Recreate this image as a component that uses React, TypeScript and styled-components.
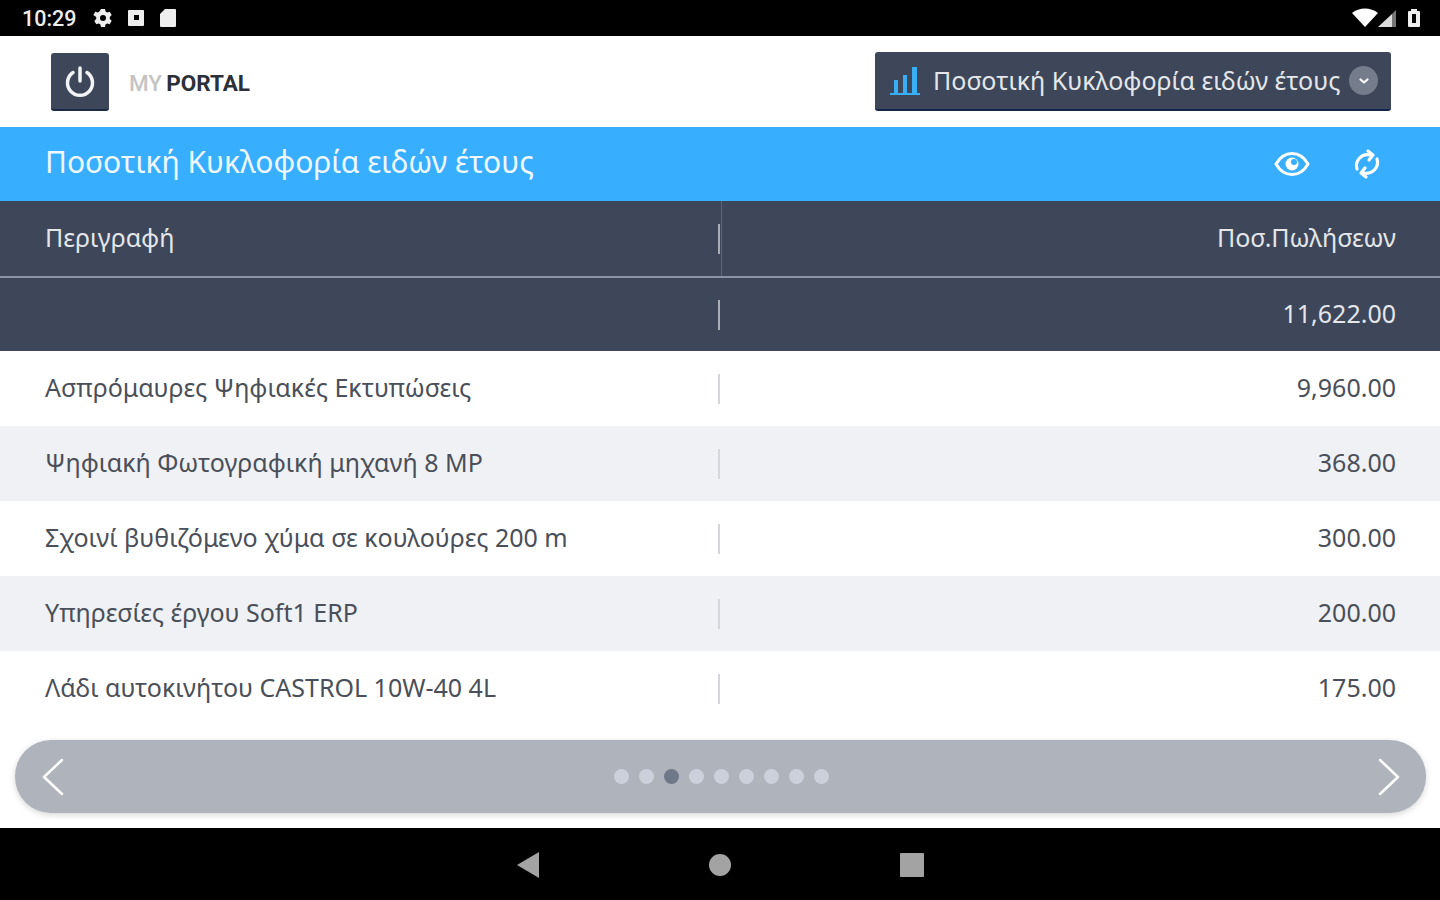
import { createGlobalStyle, styled } from "styled-components";

const rows = [
  { name: "Ασπρόμαυρες Ψηφιακές Εκτυπώσεις", qty: "9,960.00" },
  { name: "Ψηφιακή Φωτογραφική μηχανή 8 MP", qty: "368.00" },
  { name: "Σχοινί βυθιζόμενο χύμα σε κουλούρες 200 m", qty: "300.00" },
  { name: "Υπηρεσίες έργου Soft1 ERP", qty: "200.00" },
  { name: "Λάδι αυτοκινήτου CASTROL 10W-40 4L", qty: "175.00" },
];

const dots = [0, 1, 2, 3, 4, 5, 6, 7, 8];

export default function App() {
  return (
    <>
      <GlobalStyle />
      <Screen>
        <StatusBar>
          <StatusGroup>
            <Clock>10:29</Clock>
            <svg width="20" height="20" viewBox="0 0 20 20">
              <path
                fill="#eee"
                fillRule="evenodd"
                d="M8 1h4l.6 2.6 1.6.9 2.5-.8 2 3.4-1.9 1.800v2.100l1.900 1.800-2 3.400-2.500-.8-1.600.9L12 19H8l-.6-2.600-1.600-.9-2.500.8-2-3.400 1.900-1.800V8.900L.3 7.100l2-3.400 2.500.8 1.600-.9zM10 7a3 3 0 100 6 3 3 0 000-6z"
              />
            </svg>
            <svg width="18" height="18" viewBox="0 0 18 18">
              <path fill="#eee" fillRule="evenodd" d="M2 1h14a1 1 0 011 1v14a1 1 0 01-1 1H2a1 1 0 01-1-1V2a1 1 0 011-1zm5 5v5h5V6z" />
            </svg>
            <svg width="18" height="20" viewBox="0 0 18 20">
              <path fill="#eee" d="M6 1h10a1 1 0 011 1v16a1 1 0 01-1 1H2a1 1 0 01-1-1V6z" />
            </svg>
          </StatusGroup>
          <StatusGroup $gap={11}>
            <svg width="44" height="22" viewBox="0 0 44 22">
              <path fill="#fff" d="M0 6c7-6 19-6 26 0L13 20z" />
              <path fill="#777" d="M44 3v17h-4V7z" />
              <path fill="#ddd" d="M40 7v13H26z" />
            </svg>
            <svg width="14" height="20" viewBox="0 0 14 20">
              <path fill="#eee" fillRule="evenodd" d="M4 1h6v2h2a1 1 0 011 1v14a1 1 0 01-1 1H2a1 1 0 01-1-1V4a1 1 0 011-1h2zm1 5v9h4V6z" />
            </svg>
          </StatusGroup>
        </StatusBar>

        <Header>
          <Brand>
            <PowerButton>
              <svg width="34" height="34" viewBox="0 0 34 34" fill="none" stroke="#f2f4f7" strokeWidth="3.500" strokeLinecap="round">
                <path d="M17 4v13" />
                <path d="M10 8.500a12.500 12.500 0 1014 0" />
              </svg>
            </PowerButton>
            <Logo>
              <LogoMy>MY</LogoMy>
              <LogoPortal>PORTAL</LogoPortal>
            </Logo>
          </Brand>
          <ReportSelect>
            <svg width="30" height="32" viewBox="0 0 30 32" fill="#3aaef5">
              <rect x="4" y="15" width="4" height="13" />
              <rect x="13" y="10" width="4" height="18" />
              <rect x="22" y="2" width="5" height="26" />
              <rect x="0" y="28" width="30" height="2" />
            </svg>
            <ReportLabel>Ποσοτική Κυκλοφορία ειδών έτους</ReportLabel>
            <Chevron>
              <svg width="14" height="14" viewBox="0 0 14 14" fill="none" stroke="#fff" strokeWidth="2.200" strokeLinecap="round" strokeLinejoin="round">
                <path d="M3.500 5.500L7 8.500l3.500-3" />
              </svg>
            </Chevron>
          </ReportSelect>
        </Header>

        <TitleBar>
          <Title>Ποσοτική Κυκλοφορία ειδών έτους</Title>
          <TitleActions>
            <svg width="36" height="28" viewBox="0 0 36 28" fill="none" stroke="#fff" strokeWidth="3">
              <path d="M2 14C6 7 11 3.500 18 3.500S30 7 34 14c-4 7-9 10.500-16 10.500S6 21 2 14z" />
              <circle cx="18" cy="14" r="6.500" fill="#fff" stroke="none" />
              <circle cx="20" cy="12" r="3" fill="#38aeff" stroke="none" />
            </svg>
            <svg width="28" height="32" viewBox="0 0 28 32" fill="none" stroke="#fff" strokeWidth="3.200" strokeLinecap="round" strokeLinejoin="round">
              <path d="M4 21a11 11 0 0113-14" />
              <path d="M15 3l5 4-4 5" />
              <path d="M24 11a11 11 0 01-13 14" />
              <path d="M13 29l-5-4 4-5" />
            </svg>
          </TitleActions>
        </TitleBar>

        <HeadRow>
          <NameCell>Περιγραφή</NameCell>
          <Divider $light />
          <QtyCell>Ποσ.Πωλήσεων</QtyCell>
        </HeadRow>
        <TotalRow>
          <NameCell />
          <Divider $light />
          <QtyCell>11,622.00</QtyCell>
        </TotalRow>

        {rows.map((row, i) => (
          <DataRow key={row.name} $striped={i % 2 === 1}>
            <NameCell>{row.name}</NameCell>
            <Divider />
            <QtyCell>{row.qty}</QtyCell>
          </DataRow>
        ))}

        <PagerArea>
          <Pager>
            <svg width="26" height="38" viewBox="0 0 26 38" fill="none" stroke="#fff" strokeWidth="2.500" strokeLinecap="round" strokeLinejoin="round">
              <path d="M22 2L4 19l18 17" />
            </svg>
            <Dots>
              {dots.map((d) => (
                <Dot key={d} $active={d === 2} />
              ))}
            </Dots>
            <svg width="26" height="38" viewBox="0 0 26 38" fill="none" stroke="#fff" strokeWidth="2.500" strokeLinecap="round" strokeLinejoin="round">
              <path d="M4 2l18 17L4 36" />
            </svg>
          </Pager>
        </PagerArea>

        <NavBar>
          <svg width="24" height="26" viewBox="0 0 24 26">
            <path fill="#a3a3a3" d="M1 13L23 0v26z" />
          </svg>
          <svg width="24" height="24" viewBox="0 0 24 24">
            <circle cx="12" cy="12" r="11" fill="#a3a3a3" />
          </svg>
          <svg width="24" height="24" viewBox="0 0 24 24">
            <rect width="24" height="24" rx="1" fill="#a3a3a3" />
          </svg>
        </NavBar>
      </Screen>
    </>
  );
}

const GlobalStyle = createGlobalStyle`
  html, body {
    margin: 0;
    padding: 0;
    background: #fff;
  }

  body {
    font-family: "Noto Sans", "Open Sans", sans-serif;
  }
`;

const Screen = styled.div`
  width: 1440px;
  height: 900px;
  display: flex;
  flex-direction: column;
  overflow: hidden;
`;

const StatusBar = styled.div`
  height: 36px;
  flex: none;
  box-sizing: border-box;
  background: #000;
  display: flex;
  align-items: center;
  justify-content: space-between;
  padding: 0 19px 0 22px;
`;

const StatusGroup = styled.div<{ $gap?: number }>`
  display: flex;
  align-items: center;
  gap: ${(p) => p.$gap ?? 14}px;
`;

const Clock = styled.span`
  font-family: Roboto, sans-serif;
  font-size: 21.500px;
  font-weight: 500;
  color: #eee;
  margin-right: 2px;
`;

const Header = styled.div`
  height: 91px;
  flex: none;
  box-sizing: border-box;
  background: #fff;
  display: flex;
  align-items: center;
  justify-content: space-between;
  padding: 0 49px 0 51px;
`;

const Brand = styled.div`
  display: flex;
  align-items: center;
  gap: 20px;
`;

const PowerButton = styled.div`
  width: 58px;
  height: 58px;
  background: #3d4759;
  border-bottom: 2px solid #1c2a45;
  border-radius: 3px;
  box-sizing: border-box;
  display: flex;
  align-items: center;
  justify-content: center;
`;

const Logo = styled.div`
  font-family: Roboto, sans-serif;
  font-size: 22.500px;
  font-weight: 700;
  display: flex;
  gap: 4px;
  padding-top: 2px;
`;

const LogoMy = styled.span`
  color: #c4c4c4;
  font-weight: 500;
`;

const LogoPortal = styled.span`
  color: #2b3038;
`;

const ReportSelect = styled.div`
  width: 516px;
  height: 59px;
  box-sizing: border-box;
  background: #3d4759;
  border-bottom: 2px solid #16264a;
  border-radius: 3px;
  display: flex;
  align-items: center;
  padding: 0 13px 0 15px;
`;

const ReportLabel = styled.span`
  font-size: 25px;
  color: #e4e6ea;
  margin-left: 13px;
  padding-bottom: 2px;
  flex: 1;
  white-space: nowrap;
`;

const Chevron = styled.span`
  width: 29px;
  height: 29px;
  border-radius: 50%;
  background: #757c8c;
  display: flex;
  align-items: center;
  justify-content: center;
`;

const TitleBar = styled.div`
  height: 74px;
  flex: none;
  box-sizing: border-box;
  background: #38aeff;
  display: flex;
  align-items: center;
  justify-content: space-between;
  padding: 0 59px 1px 45px;
`;

const Title = styled.span`
  font-size: 30px;
  color: #eef8ff;
  padding-bottom: 4px;
`;

const TitleActions = styled.div`
  display: flex;
  align-items: center;
  gap: 43px;
`;

const TableRow = styled.div`
  height: 75px;
  flex: none;
  box-sizing: border-box;
  display: flex;
  align-items: center;
  padding: 0 44px 0 45px;
`;

const HeadRow = styled(TableRow)`
  position: relative;
  height: 77px;
  background: #3d4759;
  color: #e4e6ea;
  border-bottom: 2px solid #8d94a1;

  /* thin resize line of the header cell */
  &::after {
    content: "";
    position: absolute;
    top: 0;
    bottom: 0;
    left: 721px;
    width: 1px;
    background: #5d6575;
  }
`;

const TotalRow = styled(TableRow)`
  height: 73px;
  background: #3d4759;
  color: #e4e6ea;
`;

const DataRow = styled(TableRow)<{ $striped: boolean }>`
  background: ${(p) => (p.$striped ? "#eff1f5" : "#fff")};
  color: #4a4f59;
`;

const NameCell = styled.div`
  width: 673px;
  flex: none;
  font-size: 25px;
  white-space: nowrap;
  padding-bottom: 3px;
`;

const Divider = styled.div<{ $light?: boolean }>`
  width: 2px;
  height: 30px;
  flex: none;
  background: ${(p) => (p.$light ? "#a9aeb8" : "#d5d7dc")};
`;

const QtyCell = styled.div`
  flex: 1;
  font-size: 25px;
  text-align: right;
  padding-bottom: 3px;
`;

const PagerArea = styled.div`
  flex: 1;
  background: #fff;
  padding: 14px 14px 0 15px;
`;

const Pager = styled.div`
  height: 73px;
  border-radius: 36px;
  background: #aeb3bc;
  box-shadow: 0 2px 6px rgba(0, 0, 0, 0.16);
  display: flex;
  align-items: center;
  justify-content: space-between;
  padding: 0 24px 0 25px;
`;

const Dots = styled.div`
  display: flex;
  align-items: center;
  gap: 10px;
  margin-left: 1px;
`;

const Dot = styled.span<{ $active: boolean }>`
  width: 15px;
  height: 15px;
  border-radius: 50%;
  background: ${(p) => (p.$active ? "#6f778a" : "#ccd0db")};
`;

const NavBar = styled.div`
  height: 72px;
  flex: none;
  background: #000;
  display: flex;
  align-items: center;
  justify-content: center;
  gap: 168px;
  padding-top: 2px;
  box-sizing: border-box;
`;
